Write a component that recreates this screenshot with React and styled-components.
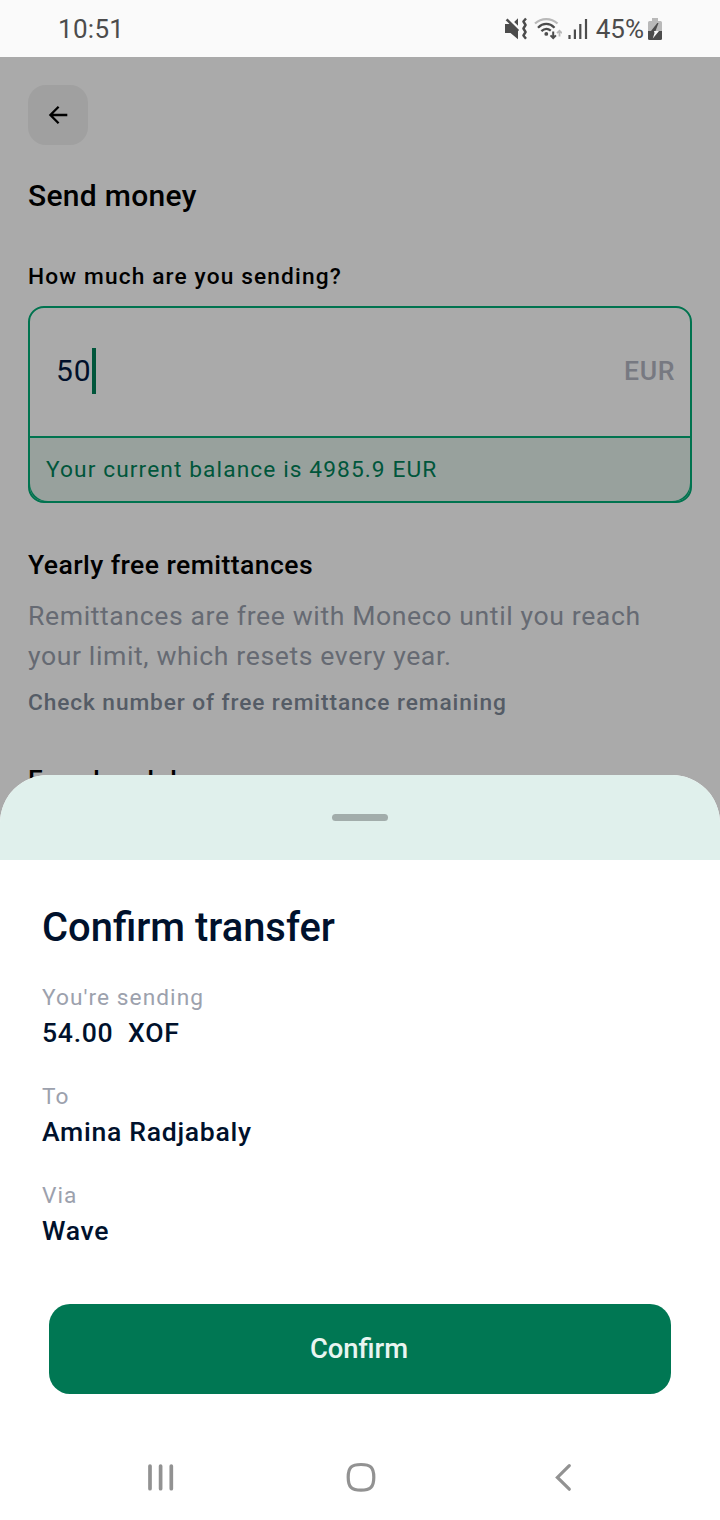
import React from 'react';
import styled, { createGlobalStyle } from 'styled-components';

const GlobalStyle = createGlobalStyle`
  *, *::before, *::after { box-sizing: border-box; }
  body { margin: 0; background: #fff; font-family: Roboto, "Liberation Sans", sans-serif; }
  svg { display: block; flex: none; }
`;

const Phone = styled.div`
  position: relative;
  display: flex;
  flex-direction: column;
  width: 720px;
  height: 1520px;
  overflow: hidden;
  background: #aaaaaa;
`;

const StatusBar = styled.header`
  flex: none;
  display: flex;
  align-items: center;
  justify-content: space-between;
  height: 57px;
  padding: 1px 58px 0 58px;
  background: #fafafa;
  color: #4c4c4c;
  font-size: 26px;
  line-height: 32px;
`;

const Clock = styled.span`
  letter-spacing: 0.3px;
`;

const StatusIcons = styled.div`
  display: flex;
  align-items: center;
`;

const Glyphs = styled.div`
  display: flex;
  align-items: center;
  gap: 6px;
`;

const BatteryLevel = styled.span`
  margin: 0 4px 0 8px;
`;

const Screen = styled.main`
  display: flex;
  flex-direction: column;
  padding: 28px 28px 0;
  color: #000;
`;

const BackButton = styled.button`
  display: flex;
  align-items: center;
  justify-content: center;
  width: 60px;
  height: 60px;
  padding: 0;
  border: 0;
  border-radius: 18px;
  background: #a0a0a0;
  color: #000;
`;

const PageTitle = styled.h1`
  margin: 33px 0 0;
  font-size: 30px;
  font-weight: 500;
  line-height: 36px;
  letter-spacing: 0.3px;
`;

const FieldLabel = styled.label`
  margin-top: 49px;
  font-size: 22.7px;
  font-weight: 500;
  line-height: 28px;
  letter-spacing: 1.14px;
`;

const AmountField = styled.div`
  display: flex;
  flex-direction: column;
  height: 197px;
  margin-top: 15px;
  border: 2px solid #00734f;
  border-radius: 16px;
  overflow: hidden;
`;

const AmountRow = styled.div`
  display: flex;
  align-items: center;
  justify-content: space-between;
  height: 130px;
  padding: 0 15px 2px 26px;
  border-bottom: 2px solid #00734f;
`;

const Amount = styled.div`
  display: flex;
  align-items: center;
  color: #00102b;
  font-size: 30px;
  line-height: 46px;
  letter-spacing: 1px;
`;

const Caret = styled.span`
  width: 4px;
  height: 46px;
  background: #00563b;
`;

const Currency = styled.span`
  color: #777981;
  font-size: 26.6px;
  font-weight: 500;
  line-height: 34px;
  letter-spacing: 0.6px;
`;

const BalanceTrack = styled.div`
  flex: 1;
  display: flex;
  background: #00734f;
`;

const Balance = styled.div`
  flex: 1;
  padding: 0 16px;
  border-radius: 0 0 18px 18px;
  background: #98a19d;
  color: #00563b;
  font-size: 22.7px;
  line-height: 63px;
  letter-spacing: 1.11px;
`;

const SectionTitle = styled.h2`
  margin: ${({ $gap }) => $gap}px 0 0;
  font-size: 26.6px;
  font-weight: 500;
  line-height: 32px;
  letter-spacing: 0.42px;
`;

const Paragraph = styled.p`
  margin: 15px 0 0;
  color: #666a73;
  font-size: 26.6px;
  line-height: 40px;
  letter-spacing: 0.61px;
`;

const TextLink = styled.a`
  margin-top: 13px;
  color: #555c66;
  font-size: 22.7px;
  font-weight: 500;
  line-height: 28px;
  letter-spacing: 0.91px;
`;

const Sheet = styled.section`
  position: absolute;
  left: 0;
  right: 0;
  bottom: 0;
  display: flex;
  flex-direction: column;
  height: 745px;
  border-radius: 48px 48px 0 0;
  overflow: hidden;
  background: #fff;
`;

const SheetHeader = styled.div`
  flex: none;
  display: flex;
  align-items: center;
  justify-content: center;
  height: 85px;
  background: #e0f0ec;
`;

const Handle = styled.span`
  width: 56px;
  height: 7px;
  border-radius: 4px;
  background: #a2adab;
`;

const SheetTitle = styled.h2`
  margin: 44px 42px 0;
  color: #00112c;
  font-size: 39.9px;
  font-weight: 500;
  line-height: 48px;
`;

const Details = styled.dl`
  display: flex;
  flex-direction: column;
  gap: 29px;
  margin: 31px 42px 0;
`;

const Detail = styled.div`
  height: 70px;
`;

const DetailLabel = styled.dt`
  color: #9ca1ad;
  font-size: 22.7px;
  line-height: 30px;
  letter-spacing: 1.05px;
`;

const DetailValue = styled.dd`
  margin: 2px 0 0;
  color: #00112c;
  font-size: 26.6px;
  font-weight: 500;
  line-height: 36px;
  letter-spacing: 0.7px;
  white-space: pre;
`;

const ConfirmButton = styled.button`
  height: 90px;
  margin: 53px 49px 0;
  padding: 0 2px 0 0;
  border: 0;
  border-radius: 21px;
  background: #007753;
  color: #e9f5f1;
  font-family: inherit;
  font-size: 27.4px;
  font-weight: 500;
  line-height: 32px;
`;

const NavBar = styled.nav`
  display: flex;
  align-items: center;
  justify-content: space-between;
  margin-top: auto;
  height: 86px;
  padding: 0 148px 0 147px;
`;

const HomeButton = styled.span`
  margin-right: 7px;
`;

const MuteIcon = () => (
  <svg width="24" height="24" viewBox="0 0 24 24">
    <path d="M1 7H6.500L14 14V22.300L6.500 16H1z" fill="#4c4c4c" />
    <path d="M2.600 2.300L14.200 14" stroke="#4c4c4c" strokeWidth="2.500" />
    <path d="M10.200 5L14 1.200V8.800z" fill="#4c4c4c" />
    <path d="M22 1.500L19.400 4.500L21.600 8L19.400 11.500L21.600 15L19.400 18.500L22 21.700" fill="none" stroke="#4c4c4c" strokeWidth="2.400" strokeLinejoin="round" />
  </svg>
);

const WifiIcon = () => (
  <svg width="28" height="24" viewBox="0 0 28 24">
    <g fill="none">
      <path d="M1 6.500C7.500.600 17 .600 23.500 6.500" stroke="#b9b9b9" strokeWidth="2.300" />
      <path d="M4 10.700C9 5.700 15.500 5.700 20.500 10.700" stroke="#4c4c4c" strokeWidth="2.300" />
      <path d="M7.400 14.200C10.500 11.300 14 11.300 16.800 13.700" stroke="#4c4c4c" strokeWidth="2.300" />
      <path d="M19.200 14.500v6.500M16.500 18.400l2.700 2.700 2.700-2.700" stroke="#4c4c4c" strokeWidth="2" />
      <path d="M25.500 19.500v-6M23 16.200l2.500-2.500 2.500 2.500" stroke="#b9b9b9" strokeWidth="1.800" />
    </g>
    <circle cx="12.300" cy="16.900" r="1.900" fill="#4c4c4c" />
  </svg>
);

const SignalIcon = () => (
  <svg width="20" height="22" viewBox="0 0 20 22">
    <path d="M1.500 17v4M6.900 11.500V21M12.300 6v15M18 1v20" stroke="#4c4c4c" strokeWidth="2.200" />
  </svg>
);

const BatteryIcon = () => (
  <svg width="14" height="22" viewBox="0 0 14 22">
    <path d="M4 0h6v3h2.500q1.500 0 1.500 1.500V13H0V4.500Q0 3 1.500 3H4z" fill="#b9b9b9" />
    <path d="M0 13h14v7.500q0 1.500-1.500 1.500h-11Q0 22 0 20.500z" fill="#4c4c4c" />
    <path d="M9.300 5L3 13h4.500l3-8z" fill="#4c4c4c" />
    <path d="M6 13h5L4.800 20.500l1.700-5.500z" fill="#fafafa" />
  </svg>
);

const ArrowLeftIcon = () => (
  <svg width="20" height="20" viewBox="0 0 20 20" fill="none" stroke="currentColor" strokeWidth="2.300">
    <path d="M19.300 10H2.500M10.600 1.800L2.400 10l8.200 8.200" />
  </svg>
);

const RecentsIcon = () => (
  <svg width="28" height="30" viewBox="0 0 28 30">
    <path d="M3 4v22.700M13.600 4v22.700M24.300 4v22.700" stroke="#929292" strokeWidth="3.700" strokeLinecap="round" />
  </svg>
);

const HomeIcon = () => (
  <svg width="30" height="30" viewBox="0 0 30 30">
    <path d="M15 2.500C24.500 2.500 27.800 5.500 27.800 15.300S24.500 28.200 15 28.200 2.200 25.200 2.200 15.300 5.500 2.500 15 2.500z" fill="none" stroke="#929292" strokeWidth="3.200" />
  </svg>
);

const NavBackIcon = () => (
  <svg width="18" height="30" viewBox="0 0 18 30">
    <path d="M15.300 3.600L3.400 15.400l11.900 11.800" fill="none" stroke="#929292" strokeWidth="3.200" strokeLinecap="round" />
  </svg>
);

const details = [
  { label: "You're sending", value: '54.00  XOF' },
  { label: 'To', value: 'Amina Radjabaly' },
  { label: 'Via', value: 'Wave' },
];

export default function App() {
  return (
    <>
      <GlobalStyle />
      <Phone>
        <StatusBar>
          <Clock>10:51</Clock>
          <StatusIcons>
            <Glyphs>
              <MuteIcon />
              <WifiIcon />
              <SignalIcon />
            </Glyphs>
            <BatteryLevel>45%</BatteryLevel>
            <BatteryIcon />
          </StatusIcons>
        </StatusBar>
        <Screen>
          <BackButton aria-label="Back"><ArrowLeftIcon /></BackButton>
          <PageTitle>Send money</PageTitle>
          <FieldLabel>How much are you sending?</FieldLabel>
          <AmountField>
            <AmountRow>
              <Amount>50<Caret /></Amount>
              <Currency>EUR</Currency>
            </AmountRow>
            <BalanceTrack>
              <Balance>Your current balance is 4985.9 EUR</Balance>
            </BalanceTrack>
          </AmountField>
          <SectionTitle $gap={46}>Yearly free remittances</SectionTitle>
          <Paragraph>
            Remittances are free with Moneco until you reach your limit, which resets every year.
          </Paragraph>
          <TextLink>Check number of free remittance remaining</TextLink>
          <SectionTitle $gap={47}>Fees breakdown</SectionTitle>
        </Screen>
        <Sheet>
          <SheetHeader><Handle /></SheetHeader>
          <SheetTitle>Confirm transfer</SheetTitle>
          <Details>
            {details.map(({ label, value }) => (
              <Detail key={label}>
                <DetailLabel>{label}</DetailLabel>
                <DetailValue>{value}</DetailValue>
              </Detail>
            ))}
          </Details>
          <ConfirmButton>Confirm</ConfirmButton>
          <NavBar>
            <RecentsIcon />
            <HomeButton><HomeIcon /></HomeButton>
            <NavBackIcon />
          </NavBar>
        </Sheet>
      </Phone>
    </>
  );
}
